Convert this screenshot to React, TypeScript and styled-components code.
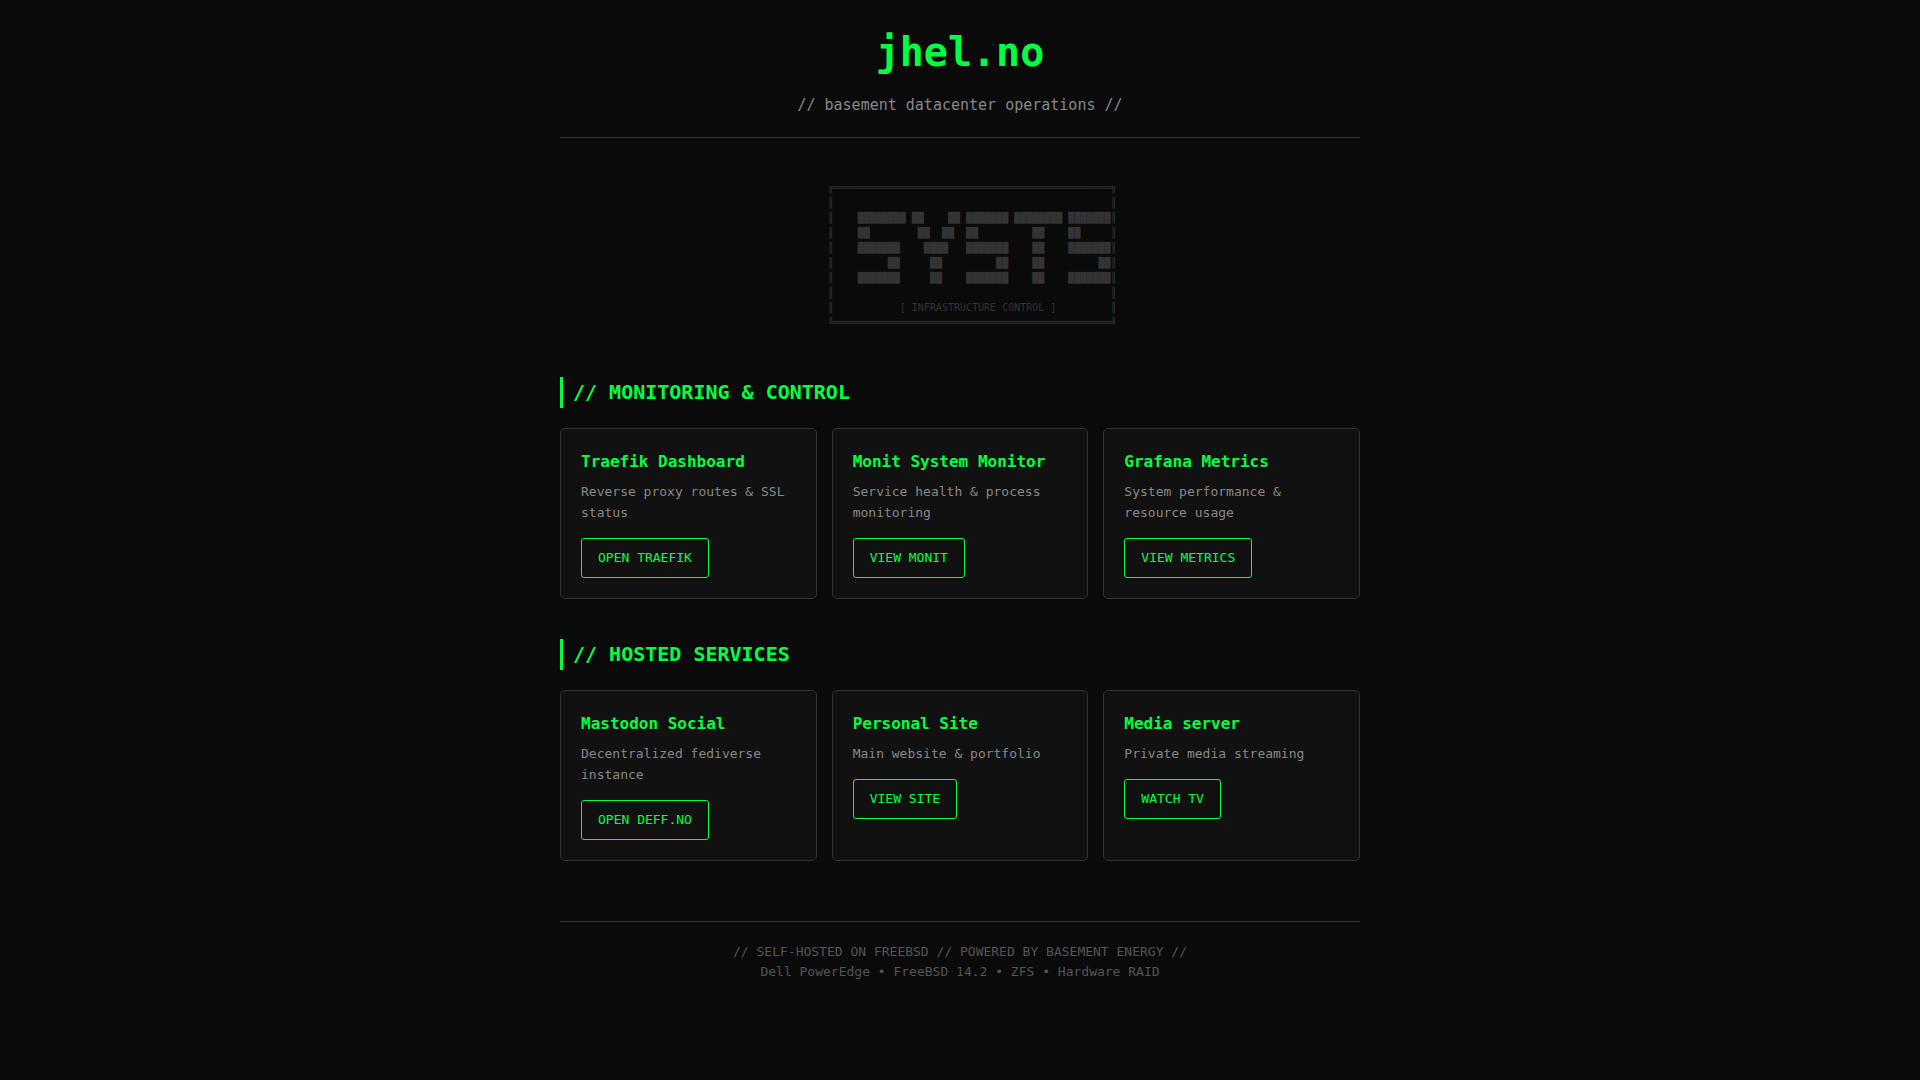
import React from "react";
import styled, { createGlobalStyle } from "styled-components";

const green = "#00ff41";
const line = "#333";

const GlobalStyle = createGlobalStyle`
  * {
    box-sizing: border-box;
    margin: 0;
    padding: 0;
  }

  body {
    min-height: 100vh;
    padding: 20px;
    background: #0a0a0a;
    color: ${green};
    font-family: "DejaVu Sans Mono", "Liberation Mono", monospace;
    font-size: 16px;
    line-height: 26px;
  }
`;

const Container = styled.div`
  max-width: 800px;
  margin: 0 auto;
`;

const Header = styled.header`
  margin-bottom: 42px;
  padding-bottom: 20px;
  border-bottom: 1px solid ${line};
  text-align: center;
`;

const SiteName = styled.h1`
  margin-bottom: 10px;
  font-size: 40px;
  line-height: 64px;
`;

const Tagline = styled.p`
  color: #888;
  font-size: 15px;
  line-height: 23px;
`;

const Banner = styled.pre`
  margin-bottom: 47px;
  color: ${line};
  font-family: inherit;
  font-size: 10px;
  line-height: 15px;
  text-align: center;
`;

const Section = styled.section`
  margin-bottom: 40px;
`;

const SectionTitle = styled.h2`
  margin-bottom: 20px;
  padding-left: 10px;
  border-left: 3px solid ${green};
  font-size: 20px;
  line-height: 31px;
`;

const CardGrid = styled.div`
  display: grid;
  grid-template-columns: repeat(auto-fit, minmax(250px, 1fr));
  gap: 15px;
`;

const Card = styled.article`
  padding: 20px;
  border: 1px solid ${line};
  border-radius: 5px;
  background: #111;
`;

const CardTitle = styled.h3`
  margin-bottom: 6px;
  font-size: 16px;
  line-height: 26px;
`;

const CardText = styled.p`
  margin-bottom: 15px;
  color: #888;
  font-size: 13px;
  line-height: 21px;
`;

const CardLink = styled.a`
  display: block;
  width: fit-content;
  padding: 8px 16px;
  border: 1px solid ${green};
  border-radius: 3px;
  color: ${green};
  font-size: 13px;
  line-height: 22px;
  text-decoration: none;

  &:hover {
    background: ${green};
    color: #0a0a0a;
  }
`;

const Footer = styled.footer`
  margin-top: 60px;
  padding-top: 20px;
  border-top: 1px solid ${line};
  color: #555;
  font-size: 13px;
  line-height: 20px;
  text-align: center;
`;

const banner = [
  "    ╔══════════════════════════════════════════════╗",
  "    ║                                              ║",
  "    ║    ████████ ██    ██ ███████ ████████ ███████║",
  "    ║    ██        ██  ██  ██         ██    ██     ║",
  "    ║    ███████    ████   ███████    ██    ███████║",
  "    ║         ██     ██         ██    ██         ██║",
  "    ║    ███████     ██    ███████    ██    ███████║",
  "    ║                                              ║",
  "    ║           [ INFRASTRUCTURE CONTROL ]         ║",
  "    ╚══════════════════════════════════════════════╝",
].join("\n");

interface Service {
  name: string;
  text: string;
  action: string;
}

const sections: { title: string; services: Service[] }[] = [
  {
    title: "// MONITORING & CONTROL",
    services: [
      { name: "Traefik Dashboard", text: "Reverse proxy routes & SSL status", action: "OPEN TRAEFIK" },
      { name: "Monit System Monitor", text: "Service health & process monitoring", action: "VIEW MONIT" },
      { name: "Grafana Metrics", text: "System performance & resource usage", action: "VIEW METRICS" },
    ],
  },
  {
    title: "// HOSTED SERVICES",
    services: [
      { name: "Mastodon Social", text: "Decentralized fediverse instance", action: "OPEN DEFF.NO" },
      { name: "Personal Site", text: "Main website & portfolio", action: "VIEW SITE" },
      { name: "Media server", text: "Private media streaming", action: "WATCH TV" },
    ],
  },
];

export default function App() {
  return (
    <>
      <GlobalStyle />
      <Container>
        <Header>
          <SiteName>jhel.no</SiteName>
          <Tagline>{"// basement datacenter operations //"}</Tagline>
        </Header>
        <main>
          <Banner>{banner}</Banner>
          {sections.map((section) => (
            <Section key={section.title}>
              <SectionTitle>{section.title}</SectionTitle>
              <CardGrid>
                {section.services.map((service) => (
                  <Card key={service.name}>
                    <CardTitle>{service.name}</CardTitle>
                    <CardText>{service.text}</CardText>
                    <CardLink href="#">{service.action}</CardLink>
                  </Card>
                ))}
              </CardGrid>
            </Section>
          ))}
        </main>
        <Footer>
          <p>{"// SELF-HOSTED ON FREEBSD // POWERED BY BASEMENT ENERGY //"}</p>
          <p>Dell PowerEdge • FreeBSD 14.2 • ZFS • Hardware RAID</p>
        </Footer>
      </Container>
    </>
  );
}
